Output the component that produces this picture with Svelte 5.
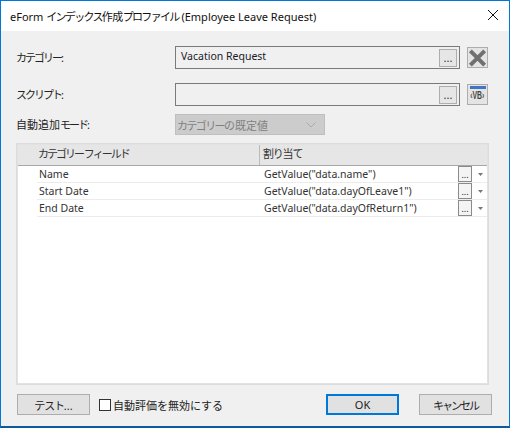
<script>
  const rows = [
    ['Name', 'GetValue("data.name")'],
    ['Start Date', 'GetValue("data.dayOfLeave1")'],
    ['End Date', 'GetValue("data.dayOfReturn1")']
  ];
</script>

<div class="window">
  <div class="titlebar">
    <span class="title">eForm <span class="kana">インデックス</span><span class="kanji">作成</span><span class="kana">プロファイル</span> (Employee Leave Request)</span>
    <svg class="close" width="12" height="12" viewBox="0 0 12 12"><path d="M1 1 L11 11 M11 1 L1 11" stroke="#111" stroke-width="1" fill="none"/></svg>
  </div>
  <div class="body">
    <div class="form-row first">
      <span class="label"><span class="kana">カテゴリー:</span></span>
      <div class="field"><span class="value">Vacation Request</span><button class="dots">...</button></div>
      <button class="tool">
        <svg width="20" height="20" viewBox="0 0 20 20"><path d="M2.5 2.5 L17.5 17.5 M17.5 2.5 L2.5 17.5" stroke="#707070" stroke-width="4.2" fill="none"/></svg>
      </button>
    </div>
    <div class="form-row second">
      <span class="label"><span class="kana">スクリプト:</span></span>
      <div class="field"><span class="value"></span><button class="dots">...</button></div>
      <button class="tool vb"><span class="vb-bar"></span><span class="vb-text">‹VB›</span></button>
    </div>
    <div class="form-row third">
      <span class="label">自動追加<span class="kana">モード:</span></span>
      <div class="select"><span><span class="kana-l">カテゴリー</span>の既定値</span>
        <svg width="10" height="6" viewBox="0 0 10 6"><path d="M0.5 0.5 L5 5 L9.5 0.5" stroke="#aaa" fill="none"/></svg>
      </div>
    </div>
    <div class="table">
      <div class="thead">
        <div class="th c1"><span class="kana">カテゴリー フィールド</span></div>
        <div class="th c2"><span class="kana-s">割り当て</span></div>
      </div>
      {#each rows as r}
        <div class="tr">
          <div class="td c1">{r[0]}</div>
          <div class="td c2">{r[1]}</div>
          <button class="cell-dots">...</button>
          <svg class="caret" width="5" height="3" viewBox="0 0 5 3"><path d="M0 0 H5 L2.5 3 Z" fill="#777"/></svg>
        </div>
      {/each}
    </div>
    <div class="footer">
      <button class="btn"><span class="kana-s">テスト</span>...</button>
      <label class="check"><span class="box"></span><span>自動評価を無効にする</span></label>
      <button class="btn ok">OK</button>
      <button class="btn cancel"><span class="kana">キャンセル</span></button>
    </div>
  </div>
</div>

<style>
  :global(body) { margin: 0; }
  .window {
    width: 510px; height: 428px; box-sizing: border-box;
    border: 1px solid #0078d7; border-bottom-width: 2px; border-bottom-color: #0a5a9c;
    background: #f0f0f0; display: flex; flex-direction: column;
    font-family: "Noto Sans", "Noto Sans CJK JP", sans-serif; font-size: 10.5px; color: #222;
  }
  button { font-family: inherit; margin: 0; padding: 0; }
  .kana { font-size: 11px; letter-spacing: -2px; }
  .kana-s { font-size: 11px; letter-spacing: -1.2px; }
  .kana-l { font-size: 11px; letter-spacing: -1.6px; }
  .kanji { font-size: 11px; letter-spacing: -0.5px; }
  .titlebar {
    height: 30px; background: #fff; display: flex; align-items: center;
    padding: 0 10px 0 9px; justify-content: space-between; flex: none;
  }
  .title { font-size: 11px; color: #111; }
  .title .kana { letter-spacing: -1.7px; }
  .close { position: relative; top: -1px; }
  .body { flex: 1; display: flex; flex-direction: column; padding: 0 16px 0 15px; min-height: 0; }
  .form-row { display: flex; align-items: center; flex: none; }
  .first { margin-top: 15px; height: 23px; }
  .second { margin-top: 14px; height: 23px; }
  .third { margin-top: 8px; height: 21px; }
  .label { width: 159px; flex: none; padding-bottom: 2px; box-sizing: border-box; font-size: 11px; }
  .field {
    width: 285px; height: 23px; box-sizing: border-box; border: 1px solid #7a7a7a;
    background: #f0f0f0; display: flex; align-items: center; justify-content: space-between;
    padding: 0 2px 0 5px; flex: none;
  }
  .value { color: #1a1a2a; padding-bottom: 4px; }
  .dots {
    width: 18px; height: 18px; background: #e6e6e6; border: 1px solid #adadad;
    font-size: 11px; color: #333; line-height: 14px;
  }
  .tool {
    width: 21px; height: 21px; margin-left: 7px; background: #e4e4e4; border: 1px solid #adadad;
    display: flex; align-items: center; justify-content: center; flex: none;
  }
  .vb { flex-direction: column; justify-content: flex-start; padding: 1px 1px; }
  .vb-bar { display: block; width: 16px; height: 3px; background: #4472c4; flex: none; }
  .vb-text { display: block; font-size: 11px; line-height: 13px; color: #444; font-weight: 700; font-family: "Liberation Sans", sans-serif; letter-spacing: 0; white-space: nowrap; transform: scaleX(0.62); }
  .select {
    width: 150px; height: 21px; box-sizing: border-box; background: #cccccc; border: 1px solid #bfbfbf;
    color: #7f7f7f; display: flex; align-items: center; justify-content: space-between;
    padding: 0 8px 0 1px; font-size: 11px;
  }
  .table {
    margin-top: 8px; height: 242px; box-sizing: border-box; border: 1px solid #dcdcdc;
    width: 473px; background: #fff; flex: none;
    box-shadow: inset 0 0 0 1px #e2e2e2;
  }
  .thead {
    display: flex; height: 20px; margin: 1px 1px 0 1px; background: #e6e6e6;
    border-bottom: 1px solid #a8a8a8;
  }
  .th { line-height: 17px; color: #333; }
  .th.c1 { width: 221px; padding-left: 20px; box-sizing: content-box; border-right: 1px solid #bbb; }
  .th.c2 { padding-left: 3px; }
  .tr {
    display: flex; align-items: center; height: 17px; box-sizing: border-box; margin-left: 20px; margin-right: 1px;
    border-bottom: 1px solid #ececec;
  }
  .td { color: #333; line-height: 14px; }
  .td.c1 { width: 222px; padding-left: 2px; box-sizing: border-box; }
  .td.c2 { flex: 1; padding-left: 5px; }
  .cell-dots {
    width: 14px; height: 16px; background: #f4f4f4; border: 1px solid #8a8a8a;
    font-size: 9px; color: #222; line-height: 13px; flex: none;
  }
  .caret { margin: 0 4px 0 6px; flex: none; }
  .footer { display: flex; align-items: center; margin-top: 9px; height: 21px; flex: none; }
  .btn {
    width: 73px; height: 21px; box-sizing: border-box; background: #e1e1e1; border: 1px solid #adadad;
    font-size: 11px; color: #222; margin-left: 1px; flex: none;
  }
  .check { display: flex; align-items: center; gap: 2px; margin-left: 9px; font-size: 11px; width: 227px; flex: none; }
  .box { width: 12px; height: 12px; box-sizing: border-box; border: 1px solid #333; background: #fff; flex: none; }
  .ok { border: 2px solid #0078d7; margin-left: 0; }
  .cancel { margin-left: 20px; }
</style>
